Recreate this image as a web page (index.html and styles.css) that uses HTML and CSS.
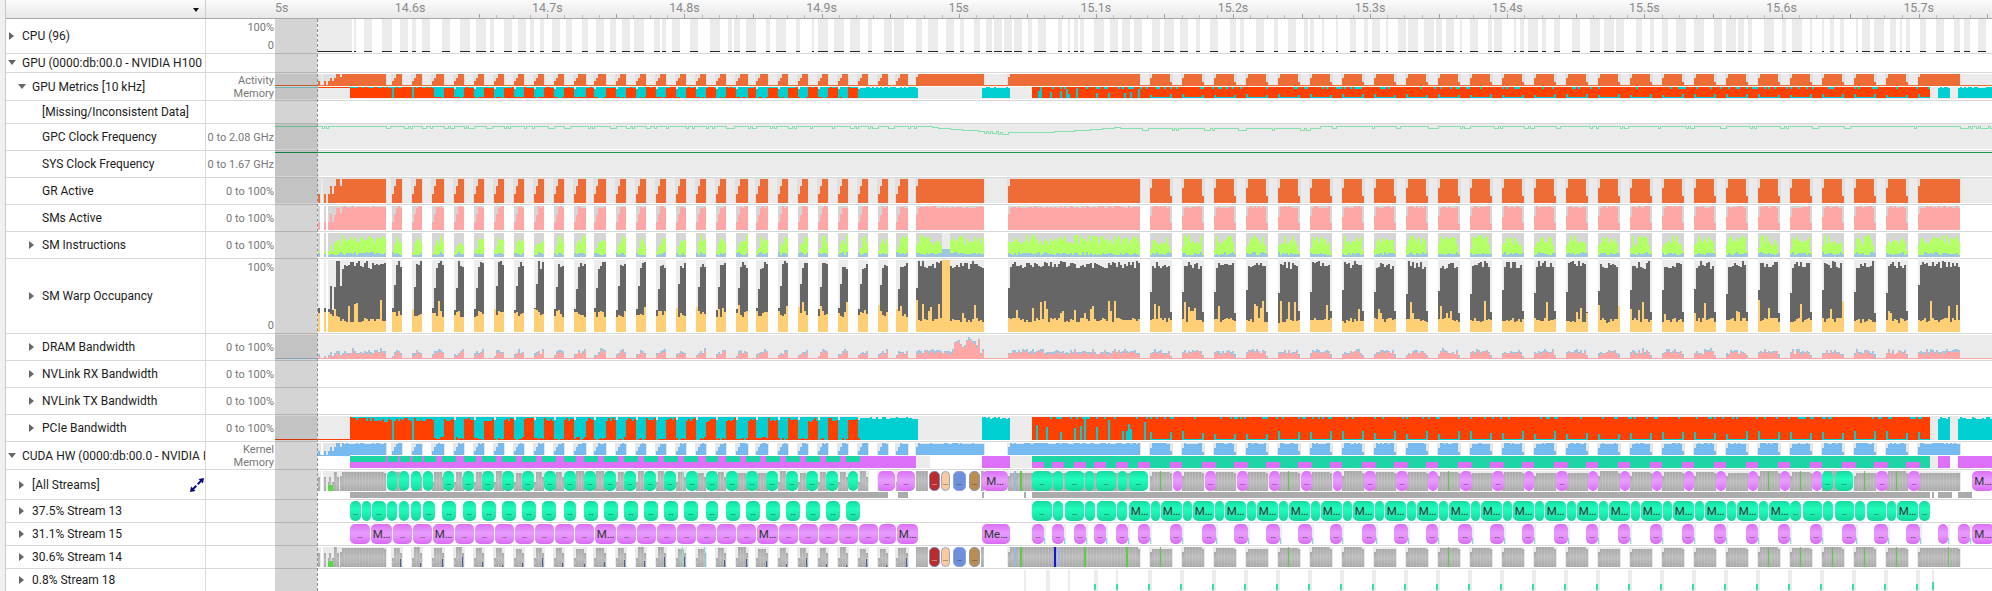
FILE: index.html
```html
<!DOCTYPE html>
<html lang="en">
<head>
    <meta charset="UTF-8">
    <title>Nsight Systems Timeline</title>
    <link rel="stylesheet" href="styles.css">
</head>
<body>
    <div class="profiler">
        <div class="row row-header">
            <div class="name"><span class="sort-arrow"></span></div>
            <div class="value"></div>
            <div class="axis" id="axis"></div>
        </div>

        <div class="row h35">
            <div class="name lvl0"><i class="arrow right"></i>CPU (96)</div>
            <div class="value spread"><span>100%</span><span>0</span></div>
            <div class="track" id="track-cpu"></div>
        </div>
        <div class="row h19">
            <div class="name lvl0"><i class="arrow down"></i>GPU (0000:db:00.0 - NVIDIA H100</div>
            <div class="value"></div>
            <div class="track"></div>
        </div>
        <div class="row h28">
            <div class="name lvl1"><i class="arrow down"></i>GPU Metrics [10 kHz]</div>
            <div class="value pair"><span>Activity</span><span>Memory</span></div>
            <div class="track" id="track-metrics"></div>
        </div>
        <div class="row h23">
            <div class="name lvl2"><i class="arrow none"></i>[Missing/Inconsistent Data]</div>
            <div class="value"></div>
            <div class="track"></div>
        </div>
        <div class="row h27">
            <div class="name lvl2"><i class="arrow none"></i>GPC Clock Frequency</div>
            <div class="value">0 to 2.08 GHz</div>
            <div class="track" id="track-gpc"></div>
        </div>
        <div class="row h27">
            <div class="name lvl2"><i class="arrow none"></i>SYS Clock Frequency</div>
            <div class="value">0 to 1.67 GHz</div>
            <div class="track" id="track-sys"></div>
        </div>
        <div class="row h27">
            <div class="name lvl2"><i class="arrow none"></i>GR Active</div>
            <div class="value">0 to 100%</div>
            <div class="track" id="track-gr"></div>
        </div>
        <div class="row h27">
            <div class="name lvl2"><i class="arrow none"></i>SMs Active</div>
            <div class="value">0 to 100%</div>
            <div class="track" id="track-sms"></div>
        </div>
        <div class="row h27">
            <div class="name lvl2"><i class="arrow right"></i>SM Instructions</div>
            <div class="value">0 to 100%</div>
            <div class="track" id="track-instr"></div>
        </div>
        <div class="row h75">
            <div class="name lvl2"><i class="arrow right"></i>SM Warp Occupancy</div>
            <div class="value spread"><span>100%</span><span>0</span></div>
            <div class="track" id="track-warp"></div>
        </div>
        <div class="row h27">
            <div class="name lvl2"><i class="arrow right"></i>DRAM Bandwidth</div>
            <div class="value">0 to 100%</div>
            <div class="track" id="track-dram"></div>
        </div>
        <div class="row h27">
            <div class="name lvl2"><i class="arrow right"></i>NVLink RX Bandwidth</div>
            <div class="value">0 to 100%</div>
            <div class="track"></div>
        </div>
        <div class="row h27">
            <div class="name lvl2"><i class="arrow right"></i>NVLink TX Bandwidth</div>
            <div class="value">0 to 100%</div>
            <div class="track"></div>
        </div>
        <div class="row h27">
            <div class="name lvl2"><i class="arrow right"></i>PCIe Bandwidth</div>
            <div class="value">0 to 100%</div>
            <div class="track" id="track-pcie"></div>
        </div>
        <div class="row h28">
            <div class="name lvl0"><i class="arrow down"></i>CUDA HW (0000:db:00.0 - NVIDIA H100</div>
            <div class="value pair"><span>Kernel</span><span>Memory</span></div>
            <div class="track" id="track-cuda"></div>
        </div>
        <div class="row h30">
            <div class="name lvl1">
                <i class="arrow right"></i>[All Streams]
                <svg class="expand-icon" viewBox="0 0 14 14" width="14" height="14">
                    <path d="M14 0 L8.5 1 L10 2.6 L7 5.6 L8.4 7 L11.4 4 L13 5.5 Z" fill="#0a0a80"/>
                    <path d="M0 14 L5.5 13 L4 11.4 L7 8.4 L5.6 7 L2.6 10 L1 8.5 Z" fill="#0a0a80"/>
                </svg>
            </div>
            <div class="value"></div>
            <div class="track" id="track-all"></div>
        </div>
        <div class="row h23">
            <div class="name lvl1"><i class="arrow right"></i>37.5% Stream 13</div>
            <div class="value"></div>
            <div class="track" id="track-s13"></div>
        </div>
        <div class="row h23">
            <div class="name lvl1"><i class="arrow right"></i>31.1% Stream 15</div>
            <div class="value"></div>
            <div class="track" id="track-s15"></div>
        </div>
        <div class="row h23">
            <div class="name lvl1"><i class="arrow right"></i>30.6% Stream 14</div>
            <div class="value"></div>
            <div class="track" id="track-s14"></div>
        </div>
        <div class="row h23">
            <div class="name lvl1"><i class="arrow right"></i>0.8% Stream 18</div>
            <div class="value"></div>
            <div class="track" id="track-s18"></div>
        </div>

        <div class="shade"></div>
        <div class="cursor"></div>
    </div>

    <script src="timeline.js"></script>
</body>
</html>
```

FILE: styles.css
```css
html, body {
    height: 100%;
    margin: 0;
    overflow: hidden;
}

body {
    font-family: Roboto, 'Liberation Sans', sans-serif;
    background: #f0f0f0;
    color: #1c1c1c;
}

.profiler {
    position: relative;
    height: 591px;
    margin-left: 5px;
    border-left: 1px solid #c8c8c8;
    background: #fff;
    overflow: hidden;
}

.row {
    display: flex;
    box-sizing: border-box;
    border-bottom: 1px solid #d8d8d8;
}

.row-header {
    height: 19px;
    background: linear-gradient(to bottom, #fbfbfb, #e8e8e8);
    border-bottom: 1px solid #a8a8a8;
}

.h19 { height: 19px; }
.h23 { height: 23px; }
.h27 { height: 27px; }
.h28 { height: 28px; }
.h30 { height: 30px; }
.h35 { height: 35px; }
.h75 { height: 75px; }

.name {
    position: relative;
    flex: 0 0 200px;
    box-sizing: border-box;
    display: flex;
    align-items: center;
    font-size: 12px;
    white-space: nowrap;
    overflow: hidden;
    border-right: 1px solid #d8d8d8;
}

.lvl0 { padding-left: 3px; }
.lvl1 { padding-left: 13px; }
.lvl2 { padding-left: 23px; }

.arrow {
    flex: 0 0 13px;
    height: 8px;
    position: relative;
}

.arrow.right::before {
    content: "";
    position: absolute;
    left: 0;
    top: 0;
    border-style: solid;
    border-width: 4px 0 4px 5px;
    border-color: transparent transparent transparent #666;
}

.arrow.down::before {
    content: "";
    position: absolute;
    left: -1px;
    top: 1px;
    border-style: solid;
    border-width: 5px 4px 0 4px;
    border-color: #666 transparent transparent transparent;
}

.row-header .name {
    border-right-color: #ccc;
}

.sort-arrow {
    position: absolute;
    left: 187px;
    top: 8px;
    border-style: solid;
    border-width: 4px 3px 0 3px;
    border-color: #111 transparent transparent transparent;
}

.expand-icon {
    position: absolute;
    left: 184px;
    top: 8px;
}

.value {
    flex: 0 0 69px;
    box-sizing: border-box;
    display: flex;
    align-items: center;
    justify-content: flex-end;
    padding-right: 1px;
    font-size: 11px;
    color: #777;
    white-space: nowrap;
}

.value.spread, .value.pair {
    flex-direction: column;
    align-items: flex-end;
}

.value.spread {
    justify-content: space-between;
    padding-top: 2px;
    padding-bottom: 1px;
}

.value.pair {
    justify-content: center;
    line-height: 13px;
}

.axis, .track {
    position: relative;
    flex: 1 1 auto;
    overflow: hidden;
}

.axis-label {
    position: absolute;
    top: 0;
    font-size: 12.4px;
    line-height: 15px;
    color: #8a8a8a;
    transform: translateX(-50%);
}

.axis-tick {
    position: absolute;
    bottom: 0;
    width: 1px;
    height: 3px;
    background: #bdbdbd;
}

.axis-tick.major {
    height: 4px;
    background: #a0a0a0;
}

.chart {
    display: block;
    shape-rendering: crispEdges;
}

.block {
    position: absolute;
    box-sizing: border-box;
    display: flex;
    align-items: center;
    justify-content: center;
    border-radius: 5px;
    font-size: 11.5px;
    color: #333;
    overflow: hidden;
    white-space: nowrap;
}

.block.dots {
    font-size: 8px;
    padding-top: 3px;
}

.teal {
    background: linear-gradient(to bottom, #16d9a4, #20fdbb 40%, #1cf0b0 65%, #14d49d);
}

.purple {
    background: linear-gradient(to bottom, #dc6ef6, #e89cff 45%, #e694fd 60%, #d96af3);
}

.red {
    background: #b92b2d;
    border: 1px solid #7b8ab8;
    color: #eee;
}

.peach {
    background: #f9cb9c;
    border: 1px solid #9aa5c9;
}

.blue {
    background: #6e90dc;
    border: 1px solid #8ea5d8;
}

.gold {
    background: #b98d52;
    border: 1px solid #8b98bd;
}

.stripes {
    position: absolute;
    background:
        linear-gradient(to bottom, rgba(255, 255, 255, 0), rgba(255, 255, 255, .22) 50%, rgba(255, 255, 255, 0)),
        repeating-linear-gradient(90deg, #a9a9a9 0 2px, #b5b5b5 2px 3px);
}

.gray-bar {
    position: absolute;
    background: #ababab;
}

.shade {
    position: absolute;
    left: 269px;
    top: 19px;
    bottom: 0;
    width: 42px;
    background: rgba(0, 0, 0, .17);
}

.cursor {
    position: absolute;
    left: 311px;
    top: 19px;
    bottom: 0;
    border-left: 1px dashed #8c8c8c;
}
```

FILE: timeline.js
```js
// Timeline drawing. All x and y below are page pixels, the charts map them with a viewBox.
const viewLeft = 275;
const viewWidth = 1717;

const colors = {
    gap: '#ebebeb',
    back: '#e0e0e0',
    orange: '#ee6c35',
    red: '#ff4000',
    cyan: '#00cfd2',
    pink: '#ffa6a6',
    green: '#b2ff66',
    steel: '#9fc5e0',
    dark: '#666666',
    yellow: '#ffcf75',
    sky: '#76baf0',
    teal: '#1dd5a5',
    purple: '#dd70f8'
};

let seed = 4711;
function rnd() {
    seed = (seed * 16807) % 2147483647;
    return (seed - 1) / 2147483646;
}

function between(a, b) {
    return a + (b - a) * rnd();
}

// Bursts of GPU work, they repeat every 20px on the left and every 32px on the right
const bursts = [
    [318, 320], [324, 326], [328, 331], [332, 339], [340, 386],
    [392, 402], [412, 422], [432, 444], [454, 464], [474, 484], [494, 504], [514, 524],
    [534, 544], [554, 564], [574, 586], [594, 606], [616, 626], [636, 646], [656, 666],
    [676, 686], [696, 706], [716, 726], [736, 748], [756, 768], [778, 788], [798, 808],
    [818, 828], [838, 848], [858, 868], [878, 888], [896, 908], [916, 984], [1008, 1140]
];
for (let x = 1150; x <= 1886; x += 32) {
    bursts.push([x, x + 22]);
}
bursts.push([1918, 1960]);

function inBurst(x) {
    return bursts.find(b => x >= b[0] && x < b[1]);
}

function envelope(b, x) {
    const w = b[1] - b[0];
    const i = (x - b[0]) / 2;
    const last = w / 2 - 1;
    if (w <= 14) {
        if (i < 1) return 0.35;
        if (i < 2) return 0.68;
        return 1;
    }
    if (w === 22) {
        return i >= last ? 0.3 : (i < 1 ? 0.6 : 1);
    }
    return i < 1 ? 0.7 : 1;
}

function eachColumn(fn) {
    bursts.forEach(b => {
        for (let x = b[0]; x < b[1]; x += 2) {
            fn(x, envelope(b, x), b);
        }
    });
}

function newChart(id) {
    const track = document.getElementById(id);
    const box = track.getBoundingClientRect();
    const parts = [];
    return {
        track: track,
        top: box.top,
        rect(x, y, w, h, fill) {
            if (w > 0 && h > 0) {
                parts.push(`<rect x="${x}" y="${y}" width="${w}" height="${h}" fill="${fill}"/>`);
            }
        },
        // Column standing on a baseline
        bar(x, bottom, h, fill, w) {
            this.rect(x, bottom - h, w || 2, h, fill);
        },
        raw(text) {
            parts.push(text);
        },
        done() {
            track.insertAdjacentHTML('afterbegin',
                `<svg class="chart" width="${viewWidth}" height="${box.height}" viewBox="${viewLeft} ${box.top} ${viewWidth} ${box.height}">${parts.join('')}</svg>`);
        }
    };
}

function drawAxis() {
    const axis = document.getElementById('axis');
    const zero = 958.7;
    const perTenth = 137.14;
    for (let i = -28; i <= 64; i++) {
        const x = zero + i * perTenth / 8;
        const tick = document.createElement('div');
        tick.className = i % 4 === 0 ? 'axis-tick major' : 'axis-tick';
        tick.style.left = Math.round(x - viewLeft) + 'px';
        axis.appendChild(tick);
    }
    for (let i = -5; i <= 7; i++) {
        const label = document.createElement('div');
        label.className = 'axis-label';
        label.textContent = i === 0 ? '15s' : (15 + i / 10).toFixed(1) + 's';
        label.style.left = (zero + i * perTenth - viewLeft) + 'px';
        axis.appendChild(label);
    }
}

function drawCpu() {
    const c = newChart('track-cpu');
    c.rect(318, 19, 34, 32, colors.gap);
    c.rect(318, 51, 34, 1, '#222');
    let x = 354;
    while (x < 1992) {
        const w = Math.round(between(1, 5.5)) * 2;
        c.rect(x, 19, w, 32, colors.gap);
        c.rect(x, 51, w, 1, '#222');
        x += w + Math.round(between(1, 6)) * 2;
    }
    c.done();
}

// Memory and PCIe rows share the same shape: red traffic and cyan idle
function drawTraffic(c, top, bottom, slack) {
    const h = bottom - top;
    for (let x = 350; x < 1992; x += 2) {
        const b = inBurst(x);
        if (x < 434) {
            c.bar(x, bottom, h, colors.cyan);
            c.bar(x, bottom, h * between(1 - slack, 0.98), colors.red);
            if (x === 392 || x === 412) c.bar(x, bottom, h, colors.cyan);
        } else if (x < 860) {
            c.bar(x, bottom, h, colors.gap);
            if (b) {
                const e = envelope(b, x);
                c.bar(x, bottom, h * (e > 0.5 ? 1 : 0.85), colors.cyan);
                c.bar(x, bottom, h * between(0, 0.12), colors.red);
            } else {
                c.bar(x, bottom, h, colors.cyan);
                c.bar(x, bottom, h * between(1 - slack, 0.98), colors.red);
            }
        } else if (x < 918 || (x >= 982 && x < 1010)) {
            c.bar(x, bottom, h, colors.gap);
            c.bar(x, bottom, h * between(0.9, 1), colors.cyan);
        } else if (x < 1032) {
            c.bar(x, bottom, h, colors.gap);
        } else if (x < 1930) {
            c.bar(x, bottom, h, colors.red);
            if (rnd() < 0.22) c.rect(x, top, 2, 2, colors.cyan);
            if (x < 1150) {
                if (rnd() < 0.22) c.bar(x, bottom, h * between(0.3, 1), colors.cyan);
            } else if (b) {
                const i = x - b[0];
                if (i === 0 || i === 20) c.bar(x, bottom, h * between(0.25, 0.4), colors.cyan);
                c.rect(x, bottom - 1, 2, 1, colors.cyan);
            }
        } else if ((x >= 1938 && x < 1950) || x >= 1958) {
            c.bar(x, bottom, h, colors.gap);
            c.bar(x, bottom, h * between(0.9, 1), colors.cyan);
        } else {
            c.bar(x, bottom, h, colors.gap);
        }
    }
}

function drawMetrics() {
    const c = newChart('track-metrics');
    c.rect(viewLeft, 74, viewWidth, 11, colors.gap);
    c.rect(viewLeft, 88, viewWidth, 11, colors.gap);
    eachColumn(x => c.bar(x - 1, 85, 11, colors.back, 4));
    eachColumn((x, e) => c.bar(x, 85, 11 * e, colors.orange));
    c.rect(viewLeft, 85, viewWidth, 1, colors.orange);
    c.rect(viewLeft, 87, viewWidth, 1, '#7fd8d8');
    c.rect(318, 87, 32, 1, colors.red);
    drawTraffic(c, 87, 98, 0.08);
    c.done();
}

function drawClocks() {
    const gpc = newChart('track-gpc');
    gpc.rect(viewLeft, 124, viewWidth, 25, colors.gap);
    let path = `M${viewLeft} 126`;
    for (let x = 318; x < 1992; x += 2) {
        let y = 126;
        if (x > 930 && x < 1120) y = 127 + 5 * Math.sin((x - 930) / 190 * Math.PI);
        else if (x >= 1120 && x < 1320) y = 128;
        if (!inBurst(x) && rnd() < 0.6) y += 2;
        path += ` H${x} V${Math.round(y)}`;
    }
    gpc.raw(`<path d="${path} H1992" fill="none" stroke="#85e0ac" stroke-width="1"/>`);
    gpc.done();

    const sys = newChart('track-sys');
    sys.rect(viewLeft, 151, viewWidth, 25, colors.gap);
    sys.rect(viewLeft, 152, viewWidth, 1, '#1a9850');
    sys.done();
}

function drawGr() {
    const c = newChart('track-gr');
    c.rect(viewLeft, 178, viewWidth, 25, colors.gap);
    eachColumn(x => c.bar(x - 1, 203, 25, colors.back, 4));
    eachColumn((x, e) => c.bar(x, 203, 24.5 * e, colors.orange));
    c.done();
}

function drawSms() {
    const c = newChart('track-sms');
    eachColumn((x, e) => {
        c.bar(x, 230, 24, '#d6d6d6');
        c.bar(x, 230, 24 * e * between(0.9, 1), colors.pink);
    });
    c.done();
}

function drawInstr() {
    const c = newChart('track-instr');
    eachColumn((x, e) => {
        c.bar(x, 257, 24, '#d6d6d6');
        if (x >= 942 && x < 950) {
            c.bar(x, 257, 24, colors.gap);
            c.bar(x, 257, 8, colors.steel);
            return;
        }
        c.bar(x, 257, 24 * e * between(0.5, 0.92), colors.green);
        c.bar(x, 257, 24 * between(0.08, 0.2), colors.steel);
    });
    c.done();
}

function drawWarp() {
    const c = newChart('track-warp');
    eachColumn((x, e, b) => {
        c.bar(x, 332, 72, '#ececec');
        if (x >= 942 && x < 950) {
            c.bar(x, 332, 72, colors.yellow);
            return;
        }
        c.bar(x, 332, 72 * e * between(0.88, 0.99), colors.dark);
        const base = b[1] - b[0] > 14 ? between(0.13, 0.2) : between(0.2, 0.3);
        const spike = rnd() < 0.2 ? between(0.25, 0.44) : 0;
        c.bar(x, 332, 72 * Math.max(base, spike), colors.yellow);
    });
    c.done();
}

function drawDram() {
    const c = newChart('track-dram');
    c.rect(viewLeft, 335, viewWidth, 24, colors.gap);
    c.rect(viewLeft, 358, 43, 1, colors.steel);
    c.rect(318, 358, 1674, 1, colors.pink);
    eachColumn((x, e) => {
        let pink = e * between(3, 7);
        if (x >= 953 && x < 980) pink = between(9, 19);
        c.bar(x, 358, pink + between(0.5, 3), colors.steel);
        c.bar(x, 358, pink, colors.pink);
    });
    c.done();
}

function drawPcie() {
    const c = newChart('track-pcie');
    c.rect(viewLeft, 416, viewWidth, 24, colors.gap);
    c.rect(viewLeft, 439, viewWidth, 1, colors.red);
    drawTraffic(c, 417, 440, 0.2);
    c.done();
}

// Blocks of the stream rows
const teal13 = [
    [350, 361], [362, 371], [372, 386], [387, 397], [399, 409], [411, 421], [423, 435],
    [442, 456], [463, 476], [482, 496], [502, 516], [522, 536], [542, 556], [564, 576],
    [584, 598], [604, 618], [624, 638], [644, 658], [664, 678], [684, 698], [706, 718],
    [726, 740], [746, 760], [766, 780], [786, 800], [806, 820], [826, 840], [846, 860],
    [1032, 1052], [1053, 1063], [1065, 1084], [1085, 1095], [1097, 1116], [1117, 1127], [1129, 1150, 'M…'], [1151, 1160]
];
for (let x = 1161; x <= 1769; x += 32) {
    teal13.push([x, x + 21, 'M…']);
    if (x < 1769) teal13.push([x + 22, x + 31]);
}
teal13.push([1790, 1801], [1803, 1822], [1823, 1833], [1835, 1854], [1855, 1865], [1867, 1886], [1887, 1896], [1897, 1918, 'M…'], [1919, 1930]);

const purple15 = [
    [350, 370], [371, 392, 'M…'], [393, 412], [413, 432], [433, 454, 'M…'], [455, 474], [475, 494],
    [495, 514], [515, 534], [535, 554], [555, 574], [575, 594], [595, 616, 'M…'], [617, 636],
    [637, 656], [657, 676], [677, 696], [697, 716], [717, 736], [737, 756], [757, 778, 'M…'],
    [779, 798], [799, 818], [819, 838], [839, 858], [859, 878], [879, 896], [897, 918, 'M…'],
    [982, 1010, 'Me…'], [1032, 1044], [1052, 1064], [1074, 1086], [1094, 1106], [1116, 1128],
    [1138, 1150], [1170, 1182], [1202, 1216], [1234, 1248], [1266, 1280], [1298, 1312], [1330, 1342],
    [1362, 1376], [1394, 1408], [1426, 1438], [1458, 1472], [1490, 1504], [1522, 1534], [1554, 1568],
    [1586, 1598], [1618, 1630], [1650, 1662], [1682, 1694], [1714, 1726], [1746, 1758], [1778, 1790],
    [1810, 1822], [1842, 1856], [1874, 1888], [1906, 1920], [1938, 1948], [1958, 1970], [1972, 1994, 'M…']
];

const tealAll = [
    [387, 397], [399, 409], [411, 421], [423, 433], [443, 454], [463, 474], [482, 494],
    [502, 514], [522, 534], [544, 556], [564, 576], [584, 596], [604, 616], [624, 636], [644, 656],
    [664, 676], [686, 698], [706, 718], [726, 738], [746, 758], [766, 778], [786, 798], [806, 818],
    [826, 838], [848, 858], [1032, 1052], [1053, 1063], [1065, 1084], [1085, 1094], [1096, 1116],
    [1118, 1127], [1129, 1148], [1822, 1833], [1835, 1853]
];

const purpleAll = [[878, 895], [897, 915], [982, 1008, 'M…'], [1173, 1182], [1205, 1216], [1237, 1248],
    [1269, 1280], [1301, 1312], [1333, 1342], [1364, 1376], [1396, 1408], [1428, 1438], [1460, 1472],
    [1492, 1504], [1524, 1534], [1556, 1568], [1588, 1598], [1620, 1630], [1652, 1662], [1684, 1694],
    [1716, 1726], [1748, 1758], [1780, 1790], [1812, 1822], [1876, 1888], [1908, 1920], [1972, 1994, 'M…']
];

// Blocks without a label of their own in the picture
const bareAll = [1173, 1333, 1428, 1524, 1588, 1620, 1684, 1716, 1748, 1780, 1812];
const bare15 = [1938];

const odd = [[929, 940, 'red'], [941, 950, 'peach'], [953, 966, 'blue'], [969, 980, 'gold']];

function addBlock(track, rowTop, item, kind, top, bottom, bare) {
    const block = document.createElement('div');
    const w = item[1] - item[0];
    const text = item[2] || (w >= 11 && !bare ? '…' : '');
    block.className = `block ${kind}` + (text === '…' ? ' dots' : '');
    block.textContent = text;
    block.style.left = (item[0] - viewLeft) + 'px';
    block.style.width = w + 'px';
    block.style.top = (top - rowTop) + 'px';
    block.style.height = (bottom - top) + 'px';
    track.appendChild(block);
}

function addOdd(c, top, bottom) {
    odd.forEach(t => addBlock(c.track, c.top, [t[0], t[1], '…'], t[2], top, bottom));
}

function addBox(track, rowTop, className, x0, x1, top, bottom) {
    const box = document.createElement('div');
    box.className = className;
    box.style.left = (x0 - viewLeft) + 'px';
    box.style.width = (x1 - x0) + 'px';
    box.style.top = (top - rowTop) + 'px';
    box.style.height = (bottom - top) + 'px';
    track.appendChild(box);
    return box;
}

// Gray striped kernels with their colored lines, used by All Streams and Stream 14
function drawKernels(c, top, bottom, slivers, accents) {
    const h = bottom - top;
    bursts.forEach(b => {
        if (b[0] === 916) {
            [[916, 928], [981, 984]].forEach(p => addBox(c.track, c.top, 'stripes', p[0], p[1], top, bottom));
            return;
        }
        c.rect(b[0] - 1, top, b[1] - b[0] + 2, h, colors.gap);
        const narrow = b[1] - b[0] <= 14;
        const lift = narrow ? h * 0.3 : h * 0.1;
        addBox(c.track, c.top, 'stripes', b[0], b[0] + 2, bottom - (narrow ? h * 0.45 : h * 0.75), bottom);
        addBox(c.track, c.top, 'stripes', b[0] + 2, b[1] - 2, top + between(0, 2), bottom);
        addBox(c.track, c.top, 'stripes', b[1] - 2, b[1], top + lift, bottom);
        if (slivers && narrow && b[0] > 390) {
            const sliver = addBox(c.track, c.top, 'gray-bar', b[1] - 2, b[1] - 1, bottom - h * between(0.1, 0.5), bottom);
            sliver.style.background = '#4a5f9e';
        }
    });
    accents.forEach(a => {
        const line = addBox(c.track, c.top, 'gray-bar', a[0], a[0] + (a[2] || 1), top, bottom);
        line.style.background = a[1];
    });
    addBox(c.track, c.top, 'gray-bar', 328, 333, bottom - 6, bottom).style.background = '#5ad84a';
}

function drawCuda() {
    const c = newChart('track-cuda');
    c.rect(318, 455, 32, 1, colors.sky);
    eachColumn(x => c.bar(x - 1, 455, 12, '#e6e6e6', 4));
    eachColumn((x, e) => c.bar(x, 455, 12 * e * between(0.92, 1), colors.sky));
    for (let x = 350; x < 1992; x += 2) {
        if (x >= 916 && x < 982) {
            if (inBurst(x) && x < 930) c.bar(x, 468, 12, colors.gap);
            continue;
        }
        if ((x >= 1010 && x < 1032) || (x >= 1930 && x < 1938)) {
            c.bar(x, 468, 12, colors.gap);
            continue;
        }
        if (x >= 1950 && x < 1958) continue;
        const onTeal = teal13.find(t => x >= t[0] && x < t[1]);
        const onPurple = purple15.find(t => x >= t[0] && x < t[1]);
        if (x < 1010 || x >= 1930) {
            c.bar(x, 468, 12, colors.purple);
            if (onTeal && x < 860) c.rect(x, 456, 2, 6, colors.teal);
        } else {
            c.bar(x, 468, 12, colors.teal);
            if (onPurple) c.bar(x, 468, 6, colors.purple);
        }
    }
    c.done();
}

function drawAll() {
    const c = newChart('track-all');
    const accents = [[1160, '#5fc94a'], [1288, '#5fc94a'], [1448, '#5fc94a'], [1768, '#5fc94a'], [1800, '#5fc94a'], [1864, '#5fc94a'], [1896, '#5fc94a'], [1020, '#5fc94a', 2], [1014, '#9cb6e6', 2], [682, '#7fe8c8']];
    drawKernels(c, 471, 491, false, accents);
    c.done();
    [[350, 888], [898, 908], [982, 984], [1024, 1026], [1032, 1930], [1932, 1934], [1938, 1952], [1958, 1972]].forEach(p => {
        addBox(c.track, c.top, 'gray-bar', p[0], p[1], 492, 498);
    });
    tealAll.forEach(t => addBlock(c.track, c.top, t, 'teal', 471, 491));
    purpleAll.forEach(t => addBlock(c.track, c.top, t, 'purple', 471, 491, bareAll.includes(t[0])));
    addOdd(c, 471, 491);
}

function drawStreams() {
    const s13 = newChart('track-s13');
    teal13.forEach(t => addBlock(s13.track, s13.top, t, 'teal', 501, 521));

    const s15 = newChart('track-s15');
    purple15.forEach(t => {
        if (t[0] >= 1032) {
            s15.rect(t[1], 524, 2, 20, colors.gap);
            s15.rect(t[1], 538, 1, 6, '#7fd8e8');
        }
    });
    s15.done();
    purple15.forEach(t => addBlock(s15.track, s15.top, t, 'purple', 524, 544, bare15.includes(t[0])));

    const s14 = newChart('track-s14');
    const accents = [[1020, '#5fc94a', 2], [1014, '#9cb6e6', 2], [1054, '#1414d8', 2], [1058, '#9cb6e6', 2], [1084, '#5fc94a', 2], [1126, '#5fc94a', 2], [1160, '#5fc94a'], [1288, '#5fc94a'], [1448, '#5fc94a'], [1768, '#5fc94a'], [1800, '#5fc94a'], [1832, '#5fc94a'], [1864, '#5fc94a'], [1896, '#5fc94a'], [1948, '#5fc94a'], [682, '#7fe8c8'], [704, '#7fd8e8']];
    drawKernels(s14, 547, 567, true, accents);
    s14.done();
    addOdd(s14, 547, 567);

    const s18 = newChart('track-s18');
    [[1024, 2], [1046, 4], [1068, 2], [1094, 4], [1116, 2]].forEach(p => {
        s18.rect(p[0], 570, p[1], 21, colors.gap);
        if (p[0] > 1090) s18.bar(p[0], 590, 6, '#2fe0b0');
    });
    for (let x = 1148; x <= 1916; x += 32) {
        s18.rect(x, 570, 4, 21, colors.gap);
        s18.bar(x, 590, 6, '#2fe0b0');
    }
    s18.rect(1932, 570, 2, 21, colors.gap);
    s18.bar(1932, 590, 8, '#2fe0b0');
    s18.done();
}

drawAxis();
drawCpu();
drawMetrics();
drawClocks();
drawGr();
drawSms();
drawInstr();
drawWarp();
drawDram();
drawPcie();
drawCuda();
drawAll();
drawStreams();
```
